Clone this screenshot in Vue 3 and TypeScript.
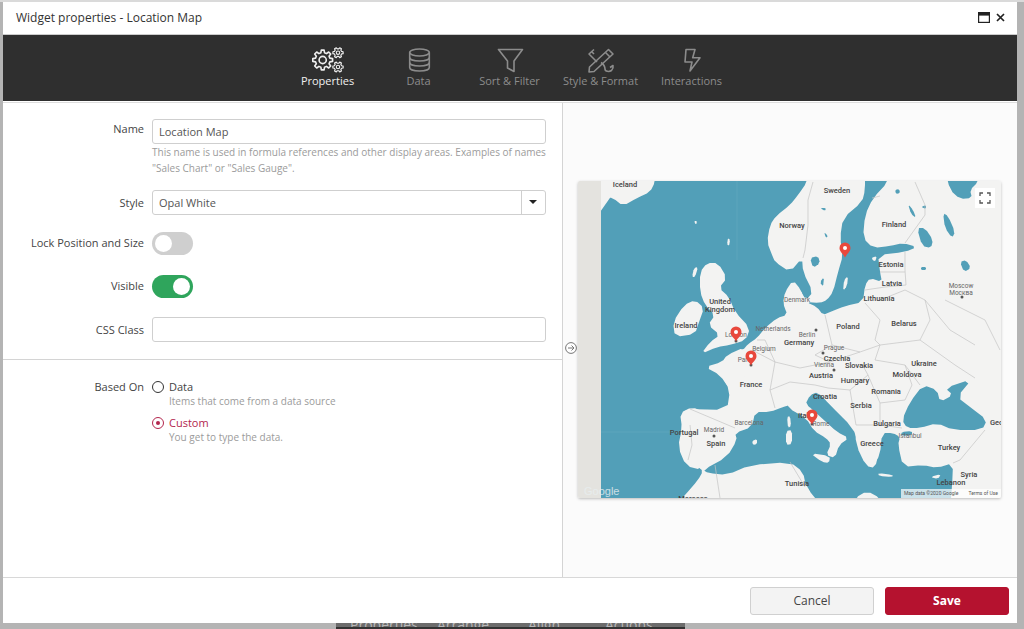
<template>
  <div class="page">
    <div class="dialog">
      <header class="titleBar">
        <span class="title">Widget properties - Location Map</span>
        <span class="winIcons">
          <svg width="12" height="11" viewBox="0 0 12 11"><rect x="0.6" y="0.6" width="10.8" height="9.8" fill="#fff" stroke="#222" stroke-width="1.2" /><rect x="0.6" y="0.6" width="10.8" height="3" fill="#222" /></svg>
          <svg width="9" height="9" viewBox="0 0 9 9"><path d="M1 1l7 7M8 1l-7 7" stroke="#222" stroke-width="1.7" fill="none" /></svg>
        </span>
      </header>

      <nav class="tabs">
        <div v-for="tab in tabs" :key="tab.id" class="tab" :class="{ active: tab.id === activeTab }">
          <svg class="tabIcon" width="36" height="26" viewBox="0 0 36 26" fill="none" stroke="currentColor" stroke-width="1.6" stroke-linejoin="round">
            <template v-if="tab.id === 'properties'">
              <path :d="gearPath(12.7, 13, 10, 7.4, 8)" />
              <circle cx="12.7" cy="13" r="3.6" />
              <path :d="gearPath(28, 5.7, 5.2, 3.8, 6)" stroke-width="1.2" />
              <circle cx="28" cy="5.7" r="1.7" stroke-width="1.1" />
              <path :d="gearPath(28, 20, 5.2, 3.8, 6)" stroke-width="1.2" />
              <circle cx="28" cy="20" r="1.7" stroke-width="1.1" />
            </template>
            <template v-else-if="tab.id === 'data'">
              <ellipse cx="18.5" cy="5.5" rx="9.8" ry="3.5" />
              <path d="M8.7 5.5V20.5C8.7 22.5 13 24 18.5 24S28.3 22.5 28.3 20.5V5.5" />
              <path d="M8.7 10.5C8.7 12.5 13 14 18.5 14S28.3 12.5 28.3 10.5" />
              <path d="M8.7 15.5C8.7 17.5 13 19 18.5 19S28.3 17.5 28.3 15.5" />
            </template>
            <template v-else-if="tab.id === 'sort'">
              <path d="M6.5 2.5H30.5L22 14V24.5L15.5 21V14Z" />
            </template>
            <template v-else-if="tab.id === 'style'">
              <path d="M25.5 2.5L30 7L11 24.5L6 25L6.5 20Z" />
              <path d="M22.5 5.5L27 10" />
              <path d="M11 2.5L6 7L14 15M9 5L11 7" />
              <path d="M18 15.5C21.5 18 22 20 22 22C22 24.5 26 25.2 28.5 23.5C30 22 30.5 20.5 30 18.5L27 20.5" />
            </template>
            <template v-else>
              <path d="M12 2.5H21L18.7 10.7H26L16 24L18 15H11Z" />
            </template>
          </svg>
          <span>{{ tab.label }}</span>
        </div>
      </nav>

      <main class="body">
        <section class="form">
          <div class="row nameRow">
            <label class="label">Name</label>
            <div class="field">
              <input v-model="widgetName" class="input" type="text" />
              <p class="help">This name is used in formula references and other display areas. Examples of names "Sales Chart" or "Sales Gauge".</p>
            </div>
          </div>

          <div class="row styleRow">
            <label class="label tall">Style</label>
            <div class="select">
              <span class="selectValue">Opal White</span>
              <span class="caret"></span>
            </div>
          </div>

          <div class="row toggleRow lockRow">
            <label class="label">Lock Position and Size</label>
            <span class="toggle"><span class="knob"></span></span>
          </div>

          <div class="row toggleRow visibleRow">
            <label class="label">Visible</label>
            <span class="toggle on"><span class="knob"></span></span>
          </div>

          <div class="row cssRow">
            <label class="label tall">CSS Class</label>
            <input class="input" type="text" />
          </div>

          <div class="divider"></div>

          <div class="row basedRow">
            <label class="label short">Based On</label>
            <div class="options">
              <div class="option">
                <span class="radio"></span>
                <div>
                  <div class="optionName">Data</div>
                  <div class="optionHelp">Items that come from a data source</div>
                </div>
              </div>
              <div class="option selected">
                <span class="radio"></span>
                <div>
                  <div class="optionName">Custom</div>
                  <div class="optionHelp">You get to type the data.</div>
                </div>
              </div>
            </div>
          </div>
        </section>

        <section class="preview">
          <span class="arrowBtn">
            <svg width="12" height="12" viewBox="0 0 12 12" fill="none" stroke="#777" stroke-width="1"><circle cx="6" cy="6" r="5.4" fill="#fff" /><path d="M3 6H9M6.5 3.5L9 6L6.5 8.5" /></svg>
          </span>
          <div class="map">
            <svg class="mapSvg" width="423" height="317" viewBox="578 181 423 317">
              <rect x="578" y="181" width="423" height="317" fill="#f3f3f2" />
              <path v-for="(d, i) in waters" :key="'w' + i" :d="d" fill="#529fb8" />
              <path v-for="(d, i) in lands" :key="'l' + i" :d="d" fill="#f3f3f2" />
              <path d="M737 181V260M601 432H680" stroke="#6aacc2" stroke-width="0.5" fill="none" />
              <path v-for="(d, i) in borders" :key="'b' + i" :d="d" fill="none" stroke="#c4c4c4" stroke-width="0.7" />
              <rect x="578" y="181" width="23" height="317" fill="#e4e3df" />
              <circle v-for="(c, i) in cityDots" :key="'c' + i" :cx="c[0]" :cy="c[1]" r="1.5" fill="#555" />
              <text
                v-for="l in mapLabels"
                :key="l.text + l.x"
                :x="l.x"
                :y="l.y"
                class="mapLabel"
                :class="{ small: l.small }"
                text-anchor="middle"
              >{{ l.text }}</text>
              <text x="584" y="495" class="googleMark">Google</text>
              <g v-for="(p, i) in pins" :key="'p' + i">
                <path :d="pinPath(p[0], p[1])" fill="#e8483c" />
                <circle :cx="p[0]" :cy="p[1]" r="2" fill="#fff" />
              </g>
            </svg>
            <span class="fullscreen">
              <svg width="12" height="12" viewBox="0 0 12 12" fill="none" stroke="#555" stroke-width="1.3"><path d="M1 4V1H4M8 1H11V4M11 8V11H8M4 11H1V8" /></svg>
            </span>
            <span class="attribution"><span>Map data ©2020 Google</span><span>Terms of Use</span></span>
          </div>
        </section>
      </main>

      <footer class="footer">
        <button class="btn cancel" type="button">Cancel</button>
        <button class="btn save" type="button">Save</button>
      </footer>
    </div>

    <div class="behind">
      <div class="toolbar">
        <span>Properties</span>
        <span>Arrange</span>
        <span>Align</span>
        <span>Actions</span>
      </div>
    </div>
  </div>
</template>

<script setup lang="ts">
import { ref } from 'vue';

const widgetName = ref('Location Map');
const activeTab = ref('properties');

const tabs = [
  { id: 'properties', label: 'Properties' },
  { id: 'data', label: 'Data' },
  { id: 'sort', label: 'Sort & Filter' },
  { id: 'style', label: 'Style & Format' },
  { id: 'interactions', label: 'Interactions' }
];

const gearPath = (cx: number, cy: number, outer: number, inner: number, teeth: number) => {
  const step = (Math.PI * 2) / teeth;
  const parts: string[] = [];
  for (let i = 0; i < teeth; i += 1) {
    const a = i * step;
    const pts: [number, number][] = [
      [a - step * 0.32, inner],
      [a - step * 0.18, outer],
      [a + step * 0.18, outer],
      [a + step * 0.32, inner]
    ];
    pts.forEach(([ang, r]) => {
      const x = (cx + Math.cos(ang) * r).toFixed(2);
      const y = (cy + Math.sin(ang) * r).toFixed(2);
      parts.push(`${parts.length ? 'L' : 'M'}${x} ${y}`);
    });
  }
  return `${parts.join('')}Z`;
};

const pinPath = (x: number, y: number) =>
  `M${x} ${y + 9.5}C${x - 1.5} ${y + 6} ${x - 5.5} ${y + 4} ${x - 5.5} ${y}A5.5 5.5 0 0 1 ${x + 5.5} ${y}C${x + 5.5} ${y + 4} ${x + 1.5} ${y + 6} ${x} ${y + 9.5}Z`;

// corner cutting so the coastlines don't look like straight polygons
const smooth = (pts: number[][]) => {
  const out: number[][] = [];
  pts.forEach((p, i) => {
    const n = pts[(i + 1) % pts.length];
    out.push([p[0] * 0.75 + n[0] * 0.25, p[1] * 0.75 + n[1] * 0.25]);
    out.push([p[0] * 0.25 + n[0] * 0.75, p[1] * 0.25 + n[1] * 0.75]);
  });
  return out;
};

const poly = (pts: number[][]) => {
  const s = smooth(pts);
  return `M${s.map((p) => `${p[0].toFixed(1)} ${p[1].toFixed(1)}`).join('L')}Z`;
};
const line = (pts: number[][]) => `M${pts.map((p) => p.join(' ')).join('L')}`;

const waters = [
  // atlantic and north sea
  poly([
    [570, 170], [808, 170], [807, 182], [798, 195], [790, 205], [776, 216], [770, 225], [767, 242], [772, 255], [775, 262],
    [790, 272], [802, 258], [803, 272], [813, 292], [806, 300], [800, 290], [793, 283], [786, 292], [785, 305],
    [787, 315], [777, 318], [765, 328], [757, 338], [748, 344], [743, 350], [727, 357], [725, 363], [708, 368],
    [720, 373], [730, 390], [727, 410], [687, 409], [682, 415], [683, 427], [680, 447], [687, 463], [698, 467],
    [703, 471], [698, 480], [685, 495], [682, 498], [680, 510], [570, 510]
  ]),
  // baltic
  poly([
    [865, 170], [888, 170], [888, 182], [873, 198], [865, 215], [863, 238], [873, 248], [890, 246], [903, 243],
    [917, 247], [905, 252], [878, 255], [880, 272], [882, 282], [870, 278], [865, 285], [863, 302], [845, 306],
    [830, 312], [823, 315], [817, 307], [806, 302], [820, 303], [827, 300], [833, 292], [838, 272], [843, 255],
    [840, 238], [843, 218], [862, 202], [865, 190]
  ]),
  // mediterranean
  poly([
    [703, 470], [727, 457], [737, 440], [735, 433], [752, 427], [755, 412], [770, 412], [783, 407], [790, 405],
    [807, 417], [815, 430], [827, 437], [833, 443], [828, 453], [833, 455], [838, 443], [847, 438], [837, 433],
    [825, 422], [805, 405], [810, 395], [818, 392], [830, 405], [853, 428], [858, 443], [868, 463], [873, 465],
    [880, 455], [882, 433], [893, 433], [900, 437], [898, 445], [903, 467], [923, 465], [937, 468], [953, 463],
    [952, 487], [950, 510], [885, 510], [880, 498], [867, 491], [855, 498], [855, 510], [825, 510], [806, 487],
    [803, 472], [790, 462], [750, 465], [727, 475], [708, 473]
  ]),
  // black sea and marmara
  poly([
    [902, 420], [910, 402], [923, 385], [937, 390], [940, 402], [953, 395], [945, 388], [972, 379], [957, 397],
    [970, 407], [987, 420], [982, 430], [953, 430], [937, 423], [920, 428], [907, 428]
  ]),
  poly([[901, 432], [912, 431], [912, 435], [902, 436]]),
  // lakes and white sea
  poly([[917, 228], [925, 228], [933, 240], [931, 248], [922, 246]]),
  poly([[943, 213], [948, 216], [955, 232], [952, 238], [945, 228]]),
  poly([[810, 258], [818, 256], [820, 263], [813, 268]]),
  poly([[945, 170], [980, 170], [978, 182], [970, 190], [972, 198], [960, 199], [950, 190]]),
  poly([[960, 262], [966, 260], [971, 268], [964, 272]]),
  poly([[921, 207], [926, 205], [926, 209]]),
  poly([[908, 204], [913, 210], [916, 218], [911, 214]]),
  poly([[895, 190], [899, 189], [900, 193], [896, 194]]),
  poly([[921, 267], [926, 267], [926, 270], [921, 270]]),
  poly([[820, 208], [826, 208], [825, 211]]),
  poly([[824, 232], [828, 236], [826, 238]]),
  poly([[820, 282], [824, 277], [823, 287]])
];

const lands = [
  // iceland
  poly([[603, 170], [655, 170], [655, 182], [650, 192], [637, 198], [623, 206], [613, 198], [605, 197], [602, 192]]),
  // great britain
  poly([
    [707, 263], [718, 263], [727, 278], [719, 288], [729, 297], [735, 312], [750, 328], [746, 340], [730, 345],
    [717, 347], [701, 354], [710, 342], [720, 335], [708, 325], [715, 315], [705, 305], [700, 292], [700, 272]
  ]),
  poly([[695, 300], [704, 308], [699, 322], [695, 334], [675, 337], [673, 322], [684, 305]]),
  poly([[694, 268], [698, 267], [695, 277], [692, 277]]),
  poly([[728, 238], [730, 240], [729, 246], [727, 244]]),
  poly([[694, 221], [697, 221], [696, 225]]),
  // coast details the big water shapes round off
  poly([[793, 280], [801, 290], [804, 300], [795, 309], [787, 314], [783, 303], [785, 292]]),
  poly([[745, 347], [727, 355], [722, 362], [705, 367], [720, 375], [730, 390], [742, 382], [752, 360]]),
  poly([[692, 407], [680, 413], [682, 428], [678, 447], [686, 466], [702, 470], [712, 440], [704, 412]]),
  poly([
    [788, 400], [805, 403], [825, 421], [837, 432], [849, 438], [839, 445], [835, 458], [826, 455], [831, 444],
    [826, 438], [814, 431], [806, 418], [788, 408]
  ]),
  poly([[855, 424], [881, 430], [879, 452], [875, 468], [866, 466], [856, 445]]),
  // mediterranean islands
  poly([[787, 417], [790, 416], [791, 426], [788, 428]]),
  poly([[786, 431], [792, 430], [792, 444], [786, 445]]),
  poly([[810, 453], [830, 456], [829, 463], [822, 462]]),
  poly([[878, 473], [893, 475], [892, 477], [879, 476]]),
  poly([[930, 477], [941, 474], [938, 479]]),
  poly([[752, 441], [757, 439], [757, 444], [753, 445]]),
  // baltic islands
  poly([[844, 280], [848, 276], [847, 286], [843, 291]]),
  poly([[871, 258], [877, 256], [875, 262]])
];

const borders = [
  line([[813, 182], [808, 200], [808, 225], [805, 250], [803, 258]]),
  line([[880, 196], [872, 198]]),
  line([[915, 182], [925, 205], [925, 215], [905, 243]]),
  line([[905, 252], [905, 270], [906, 285]]),
  line([[880, 272], [905, 272]]),
  line([[865, 290], [885, 287], [906, 285]]),
  line([[865, 303], [880, 320], [875, 340], [880, 345]]),
  line([[880, 300], [905, 290], [925, 300], [930, 320], [920, 340], [880, 345]]),
  line([[825, 315], [832, 345], [860, 352], [880, 345]]),
  line([[880, 345], [875, 360], [905, 365], [920, 385]]),
  line([[868, 375], [880, 403], [905, 400], [912, 385], [905, 365]]),
  line([[880, 403], [880, 425], [902, 428]]),
  line([[862, 364], [868, 375], [850, 390], [828, 388], [815, 385]]),
  line([[832, 345], [815, 355], [830, 362], [860, 352]]),
  line([[830, 362], [800, 368], [775, 362]]),
  line([[752, 350], [775, 362], [770, 390], [775, 408]]),
  line([[770, 390], [790, 382], [815, 385]]),
  line([[765, 340], [775, 362]]),
  line([[757, 340], [765, 340]]),
  line([[690, 409], [735, 428]]),
  line([[690, 425], [692, 445], [688, 460]]),
  line([[850, 390], [856, 425], [880, 425]]),
  line([[985, 430], [960, 460], [953, 463]]),
  line([[715, 465], [720, 498]]),
  line([[805, 487], [790, 462]]),
  line([[945, 300], [985, 320], [1000, 350]]),
  line([[925, 300], [950, 330], [975, 345]]),
  line([[920, 340], [955, 365], [975, 378]])
];

const cityDots = [[962, 297], [816, 330], [736, 341], [751, 365], [714, 436], [823, 353], [834, 370], [812, 424]];

const pins = [[845, 248], [736, 332], [751, 356], [812, 415]];

const mapLabels = [
  { text: 'Iceland', x: 625, y: 187 },
  { text: 'Sweden', x: 837, y: 193 },
  { text: 'Norway', x: 792, y: 228 },
  { text: 'Finland', x: 894, y: 227 },
  { text: 'Estonia', x: 891, y: 267 },
  { text: 'Latvia', x: 892, y: 286 },
  { text: 'Lithuania', x: 879, y: 301 },
  { text: 'Poland', x: 848, y: 329 },
  { text: 'Belarus', x: 904, y: 326 },
  { text: 'Moscow', x: 961, y: 288, small: true },
  { text: 'Москва', x: 961, y: 295, small: true },
  { text: 'Denmark', x: 797, y: 302, small: true },
  { text: 'Berlin', x: 807, y: 337, small: true },
  { text: 'Germany', x: 799, y: 345 },
  { text: 'United', x: 720, y: 304 },
  { text: 'Kingdom', x: 720, y: 312 },
  { text: 'Ireland', x: 686, y: 328 },
  { text: 'Netherlands', x: 773, y: 331, small: true },
  { text: 'Belgium', x: 764, y: 351, small: true },
  { text: 'London', x: 736, y: 337, small: true },
  { text: 'Paris', x: 745, y: 362, small: true },
  { text: 'France', x: 751, y: 387 },
  { text: 'Portugal', x: 684, y: 435 },
  { text: 'Madrid', x: 714, y: 432, small: true },
  { text: 'Spain', x: 716, y: 446 },
  { text: 'Barcelona', x: 749, y: 425, small: true },
  { text: 'Prague', x: 834, y: 350, small: true },
  { text: 'Czechia', x: 837, y: 361 },
  { text: 'Vienna', x: 824, y: 367, small: true },
  { text: 'Slovakia', x: 859, y: 368 },
  { text: 'Austria', x: 821, y: 378 },
  { text: 'Hungary', x: 855, y: 383 },
  { text: 'Moldova', x: 907, y: 377 },
  { text: 'Ukraine', x: 924, y: 366 },
  { text: 'Romania', x: 886, y: 394 },
  { text: 'Croatia', x: 825, y: 399 },
  { text: 'Serbia', x: 861, y: 408 },
  { text: 'Bulgaria', x: 887, y: 426 },
  { text: 'Italy', x: 805, y: 418 },
  { text: 'Rome', x: 821, y: 426, small: true },
  { text: 'Greece', x: 872, y: 446 },
  { text: 'Istanbul', x: 910, y: 438, small: true },
  { text: 'Turkey', x: 949, y: 450 },
  { text: 'Georgia', x: 1003, y: 425 },
  { text: 'Syria', x: 969, y: 477 },
  { text: 'Lebanon', x: 951, y: 485 },
  { text: 'Tunisia', x: 797, y: 486 },
  { text: 'Morocco', x: 693, y: 501 }
];
</script>

<style scoped>
.page {
  width: 1024px;
  height: 629px;
  overflow: hidden;
  display: flex;
  flex-direction: column;
  background: #b4b4b4;
  border-top: 2px solid #dadada;
  box-sizing: border-box;
  font-family: "Open Sans", "Liberation Sans", sans-serif;
  color: #333;
}

.dialog {
  flex: none;
  width: 1014px;
  height: 621px;
  margin-left: 3px;
  display: flex;
  flex-direction: column;
  background: #fff;
}

.titleBar {
  flex: none;
  height: 33px;
  display: flex;
  align-items: center;
  justify-content: space-between;
  padding: 0 12px 1px 13px;
  box-sizing: border-box;
  border-bottom: 1px solid #ccc;
}

.title {
  font-size: 12px;
  font-weight: 500;
  color: #333;
}

.winIcons {
  display: flex;
  align-items: center;
  gap: 6px;
}

.tabs {
  flex: none;
  height: 66px;
  background: #2f2f2f;
  display: flex;
  justify-content: center;
  margin-bottom: 1px;
  padding-right: 1px;
}

.tab {
  width: 91px;
  padding-top: 12px;
  display: flex;
  flex-direction: column;
  align-items: center;
  color: #8c8c8c;
  font-size: 11px;
  line-height: 14px;
  white-space: nowrap;
}

.tab.active {
  color: #efefef;
}

.tabIcon {
  display: block;
  margin-bottom: 1px;
}

.body {
  flex: 1;
  min-height: 0;
  display: flex;
  border-top: 1px solid #ddd;
  border-bottom: 1px solid #d8d8d8;
}

.form {
  width: 559px;
  flex: none;
  border-right: 1px solid #d4d4d4;
}

.row {
  display: flex;
  gap: 8px;
  padding-right: 16px;
}

.label {
  flex: none;
  width: 141px;
  text-align: right;
  font-size: 11px;
  font-weight: 500;
  color: #444;
  line-height: 20px;
}

.label.tall {
  line-height: 25px;
}

.label.short {
  line-height: 18px;
}

.field {
  flex: 1;
  min-width: 0;
}

.input {
  display: block;
  flex: 1;
  width: 100%;
  height: 25px;
  box-sizing: border-box;
  border: 1px solid #cfcfcf;
  border-radius: 3px;
  padding: 0 6px;
  font: 11px "Open Sans", "Liberation Sans", sans-serif;
  color: #555;
  outline: none;
}

.help {
  margin: 0;
  font-size: 10px;
  line-height: 16px;
  color: #9b9b9b;
}

.nameRow {
  margin-top: 16px;
}

.styleRow {
  margin-top: 14px;
}

.select {
  flex: 1;
  height: 25px;
  box-sizing: border-box;
  border: 1px solid #cfcfcf;
  border-radius: 3px;
  display: flex;
  align-items: center;
  justify-content: space-between;
  font-size: 11px;
  color: #555;
}

.selectValue {
  padding-left: 6px;
}

.caret {
  width: 24px;
  height: 100%;
  box-sizing: border-box;
  border-left: 1px solid #cfcfcf;
  position: relative;
}

.caret::after {
  content: "";
  position: absolute;
  left: 7px;
  top: 9px;
  border-left: 4px solid transparent;
  border-right: 4px solid transparent;
  border-top: 4px solid #222;
}

.toggleRow {
  align-items: center;
  height: 23px;
}

.toggleRow .label {
  margin-top: -2px;
}

.lockRow {
  margin-top: 17px;
}

.visibleRow {
  margin-top: 20px;
}

.cssRow {
  margin-top: 19px;
}

.toggle {
  width: 41px;
  height: 23px;
  border-radius: 12px;
  background: #cfcfcf;
  display: flex;
  align-items: center;
  padding: 0 3px;
  box-sizing: border-box;
}

.toggle.on {
  background: #2fa55c;
  justify-content: flex-end;
}

.knob {
  width: 17px;
  height: 17px;
  border-radius: 50%;
  background: #fff;
}

.divider {
  height: 1px;
  background: #d4d4d4;
  margin-top: 17px;
}

.basedRow {
  margin-top: 18px;
}

.options {
  display: flex;
  flex-direction: column;
  gap: 7px;
}

.option {
  display: flex;
  gap: 5px;
  font-size: 11px;
}

.radio {
  flex: none;
  width: 12px;
  height: 12px;
  margin-top: 3px;
  box-sizing: border-box;
  border: 1.5px solid #333;
  border-radius: 50%;
  background: #fff;
  display: flex;
  align-items: center;
  justify-content: center;
}

.optionName {
  font-weight: 500;
  color: #444;
  line-height: 18px;
}

.optionHelp {
  font-size: 10px;
  color: #9b9b9b;
  line-height: 11px;
}

.selected .radio {
  border-color: #b3264d;
}

.selected .radio::after {
  content: "";
  width: 4px;
  height: 4px;
  border-radius: 50%;
  background: #b3264d;
}

.selected .optionName {
  color: #b3264d;
}

.preview {
  flex: 1;
  min-width: 0;
  background: #fbfbfb;
  display: flex;
  align-items: center;
  padding: 0 0 2px 15px;
  position: relative;
}

.arrowBtn {
  position: absolute;
  left: 2px;
  top: 234px;
  display: block;
  height: 12px;
}

.map {
  position: relative;
  width: 423px;
  height: 317px;
  border-radius: 2px;
  overflow: hidden;
  box-shadow: 0 1px 3px rgba(0, 0, 0, 0.25);
}

.mapSvg {
  display: block;
}

.mapLabel {
  font-family: Roboto, "Liberation Sans", sans-serif;
  font-size: 7.5px;
  font-weight: 500;
  fill: #444;
}

.mapLabel.small {
  font-size: 6.5px;
  font-weight: 400;
  fill: #666;
}

.googleMark {
  font-family: "Liberation Sans", sans-serif;
  font-size: 11px;
  fill: #e8eef0;
  opacity: 0.8;
}

.fullscreen {
  position: absolute;
  right: 6px;
  top: 7px;
  width: 20px;
  height: 20px;
  background: #fff;
  display: flex;
  align-items: center;
  justify-content: center;
}

.attribution {
  position: absolute;
  right: 0;
  bottom: 0;
  height: 9px;
  width: 100px;
  padding: 0 3px;
  box-sizing: border-box;
  background: rgba(255, 255, 255, 0.7);
  display: flex;
  justify-content: space-between;
  font-family: Roboto, "Liberation Sans", sans-serif;
  font-size: 5px;
  line-height: 9px;
  color: #555;
  white-space: nowrap;
}

.footer {
  flex: none;
  height: 45px;
  display: flex;
  justify-content: flex-end;
  align-items: flex-start;
  gap: 11px;
  padding: 9px 8px 0 0;
  box-sizing: border-box;
}

.btn {
  width: 124px;
  height: 28px;
  box-sizing: border-box;
  border-radius: 3px;
  padding: 0 0 2px;
  font: 12px "Open Sans", "Liberation Sans", sans-serif;
}

.cancel {
  background: #f3f3f3;
  border: 1px solid #d0d0d0;
  color: #444;
}

.save {
  background: #b5122f;
  border: 1px solid #b5122f;
  color: #fff;
  font-weight: 700;
}

.behind {
  flex: 1;
  min-height: 0;
  overflow: hidden;
  display: flex;
  justify-content: center;
}

.toolbar {
  width: 349px;
  margin-left: -3px;
  padding-left: 14px;
  background: #6c6c6c;
  display: flex;
  font-size: 14px;
  line-height: 4px;
  color: #b8b8b8;
  border-bottom: 2px solid #333;
  overflow: hidden;
  box-sizing: border-box;
}

.toolbar span {
  flex: none;
  width: 87px;
}

.toolbar span:nth-child(2) {
  width: 91px;
}

.toolbar span:nth-child(3) {
  width: 77px;
}

.toolbar span:nth-child(4) {
  width: 60px;
}
</style>

<style>
html,
body {
  margin: 0;
  background: #b4b4b4;
}
</style>
